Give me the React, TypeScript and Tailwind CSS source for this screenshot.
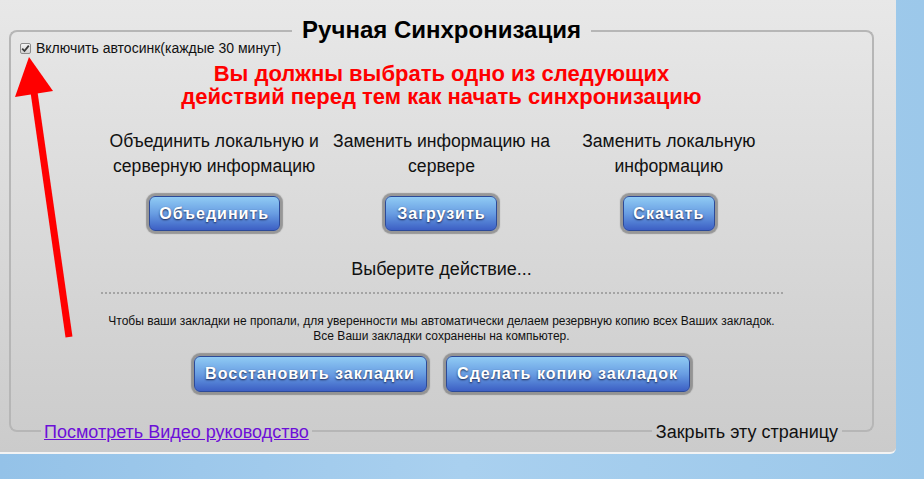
import React from "react";

const btn =
  "rounded-[6px] border border-[#2c4a98] bg-gradient-to-b from-[#90cbf4] via-[#699de2] to-[#3d5fc4] shadow-[0_0_1px_3px_rgba(115,115,115,0.65)] text-white font-bold tracking-[1px] [text-shadow:0_1px_2px_rgba(0,0,30,0.75)]";

function Column({ lines, label, w }: { lines: string[]; label: string; w: string }) {
  return (
    <div className="flex flex-col items-center">
      <div className="text-[17.6px] leading-[25px] text-[#111] text-center whitespace-nowrap">
        {lines[0]}
        <br />
        {lines[1]}
      </div>
      <button className={`${btn} ${w} mt-[17px] h-[35px] text-[16px]`}>{label}</button>
    </div>
  );
}

export default function App() {
  return (
    <div
      className="relative w-[924px] h-[479px] overflow-hidden bg-gradient-to-r from-[#94c2e8] via-[#a9d0ef] to-[#9cc8ea]"
      style={{ fontFamily: '"Liberation Sans", Arial, sans-serif' }}
    >
      <div className="w-[896px] h-[454px] rounded-br-[6px] border-b-2 border-[#f3f3f3] bg-gradient-to-b from-[#e8e8e8] to-[#cbcbcb] pl-[9px] pr-[22px] pt-[18px] flex flex-col">
        {/* top border row */}
        <div className="flex items-center h-[24px]">
          <div className="flex-1 self-end h-[12px] border-t-2 border-l-2 border-[#b6b6b6] rounded-tl-[8px]" />
          <span className="px-[10px] text-[24px] leading-[24px] font-bold text-black">Ручная Синхронизация</span>
          <div className="flex-1 self-end h-[12px] border-t-2 border-r-2 border-[#b6b6b6] rounded-tr-[8px]" />
        </div>

        {/* middle */}
        <div className="h-[379px] border-l-2 border-r-2 border-[#b6b6b6] flex flex-col">
          <div className="h-[12px] pl-[9px] flex items-center gap-[5px]">
            <div className="w-[11px] h-[11px] rounded-[2px] border border-[#8c8c8c] bg-gradient-to-b from-[#f4f4f4] to-[#d2d2d2] flex items-center justify-center">
              <svg width="9" height="9" viewBox="0 0 9 9">
                <path d="M1.2 4.6 L3.5 7 L7.8 1.6" stroke="#3a3a3a" strokeWidth="1.8" fill="none" />
              </svg>
            </div>
            <span className="text-[14px] leading-[14px] text-[#111]">Включить автосинк(каждые 30 минут)</span>
          </div>

          <div className="mt-[8px] text-center text-[22px] leading-[23px] font-bold text-[#ff0000]">
            Вы должны выбрать одно из следующих
            <br />
            действий перед тем как начать синхронизацию
          </div>

          <div className="mt-[21px] mx-auto w-[682px] grid grid-cols-3">
            <Column lines={["Объединить локальную и", "серверную информацию"]} label="Объединить" w="w-[131px]" />
            <Column lines={["Заменить информацию на", "сервере"]} label="Загрузить" w="w-[112px]" />
            <Column lines={["Заменить локальную", "информацию"]} label="Скачать" w="w-[92px]" />
          </div>

          <div className="mt-[26px] text-center text-[18px] leading-[24px] text-[#111]">Выберите действие...</div>

          <div className="mt-[11px] mx-auto w-[682px] border-t-2 border-dotted border-[#a4a4a4]" />

          <div className="mt-[20px] text-center text-[12px] leading-[15px] text-[#111]">
            Чтобы ваши закладки не пропали, для уверенности мы автоматически делаем резервную копию всех Ваших закладок.
            <br />
            Все Ваши закладки сохранены на компьютер.
          </div>

          <div className="mt-[12px] flex justify-center gap-[19px]">
            <button className={`${btn} w-[233px] h-[36px] text-[16px]`}>Восстановить закладки</button>
            <button className={`${btn} w-[244px] h-[36px] text-[16px]`}>Сделать копию закладок</button>
          </div>
        </div>

        {/* bottom border row */}
        <div className="flex items-center h-[22px]">
          <div className="w-[32px] self-start h-[11px] border-l-2 border-b-2 border-[#b6b6b6] rounded-bl-[8px]" />
          <a href="#" className="px-[3px] text-[18px] leading-[22px] text-[#6c0fd8] underline">
            Посмотреть Видео руководство
          </a>
          <div className="flex-1 self-start h-[11px] border-b-2 border-[#b6b6b6]" />
          <span className="px-[4px] text-[18px] leading-[22px] text-[#111]">Закрыть эту страницу</span>
          <div className="w-[32px] self-start h-[11px] border-r-2 border-b-2 border-[#b6b6b6] rounded-br-[8px]" />
        </div>
      </div>

      {/* red arrow annotation */}
      <svg className="absolute left-0 top-0" width="100" height="350" viewBox="0 0 100 350">
        <line x1="34" y1="92" x2="69" y2="337" stroke="#ff0000" strokeWidth="7" />
        <polygon points="29,57 15,97 53,91" fill="#ff0000" />
      </svg>
    </div>
  );
}
